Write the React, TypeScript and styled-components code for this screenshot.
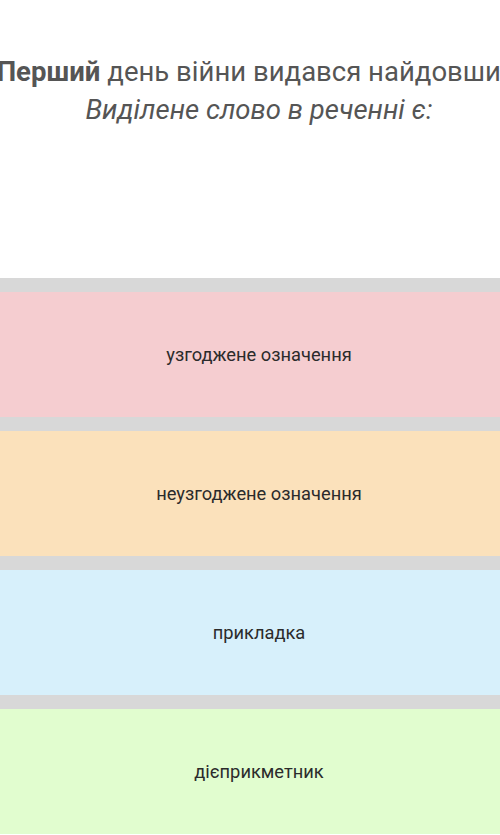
import React from 'react'
import styled, { createGlobalStyle } from 'styled-components'

const GlobalStyle = createGlobalStyle`
  html, body {
    margin: 0;
    padding: 0;
    background: #ffffff;
  }
  body {
    font-family: Roboto, "Noto Sans", "Liberation Sans", sans-serif;
    overflow: hidden;
  }
`

const Page = styled.div`
  width: 500px;
  height: 835px;
  overflow: hidden;
  background: #ffffff;
`

const Question = styled.div`
  height: 278px;
  padding-top: 53px;
  box-sizing: border-box;
  display: flex;
  flex-direction: column;
  align-items: center;
  color: #555555;
  font-size: 27.5px;
  line-height: 38px;
  margin-left: 18px;
  width: 482px;
`

const Sentence = styled.div`
  white-space: nowrap;
  width: 560px;
  display: flex;
  justify-content: center;

  b {
    font-weight: 700;
    margin-right: 7px;
  }
`

const Prompt = styled.div`
  font-style: italic;
  white-space: nowrap;
`

const Answers = styled.div`
  display: flex;
  flex-direction: column;
`

const Separator = styled.div`
  height: 14px;
  background: #d8d8d8;
`

const Answer = styled.div<{ $bg: string }>`
  height: 125px;
  background: ${p => p.$bg};
  display: flex;
  align-items: center;
  justify-content: center;
  padding-left: 18px;
  color: #2b2b2b;
  font-size: 18.3px;
`

const options = [
  { text: 'узгоджене означення', bg: '#f5cdd0' },
  { text: 'неузгоджене означення', bg: '#fbe1bb' },
  { text: 'прикладка', bg: '#d7f0fb' },
  { text: 'дієприкметник', bg: '#e1fdcf' },
]

const App = () => (
  <Page>
    <GlobalStyle />
    <Question>
      <Sentence>
        <b>Перший</b> день війни видався найдовшим
      </Sentence>
      <Prompt>Виділене слово в реченні є:</Prompt>
    </Question>
    <Answers>
      {options.map(o => (
        <React.Fragment key={o.text}>
          <Separator />
          <Answer $bg={o.bg}>{o.text}</Answer>
        </React.Fragment>
      ))}
    </Answers>
  </Page>
)

export default App
